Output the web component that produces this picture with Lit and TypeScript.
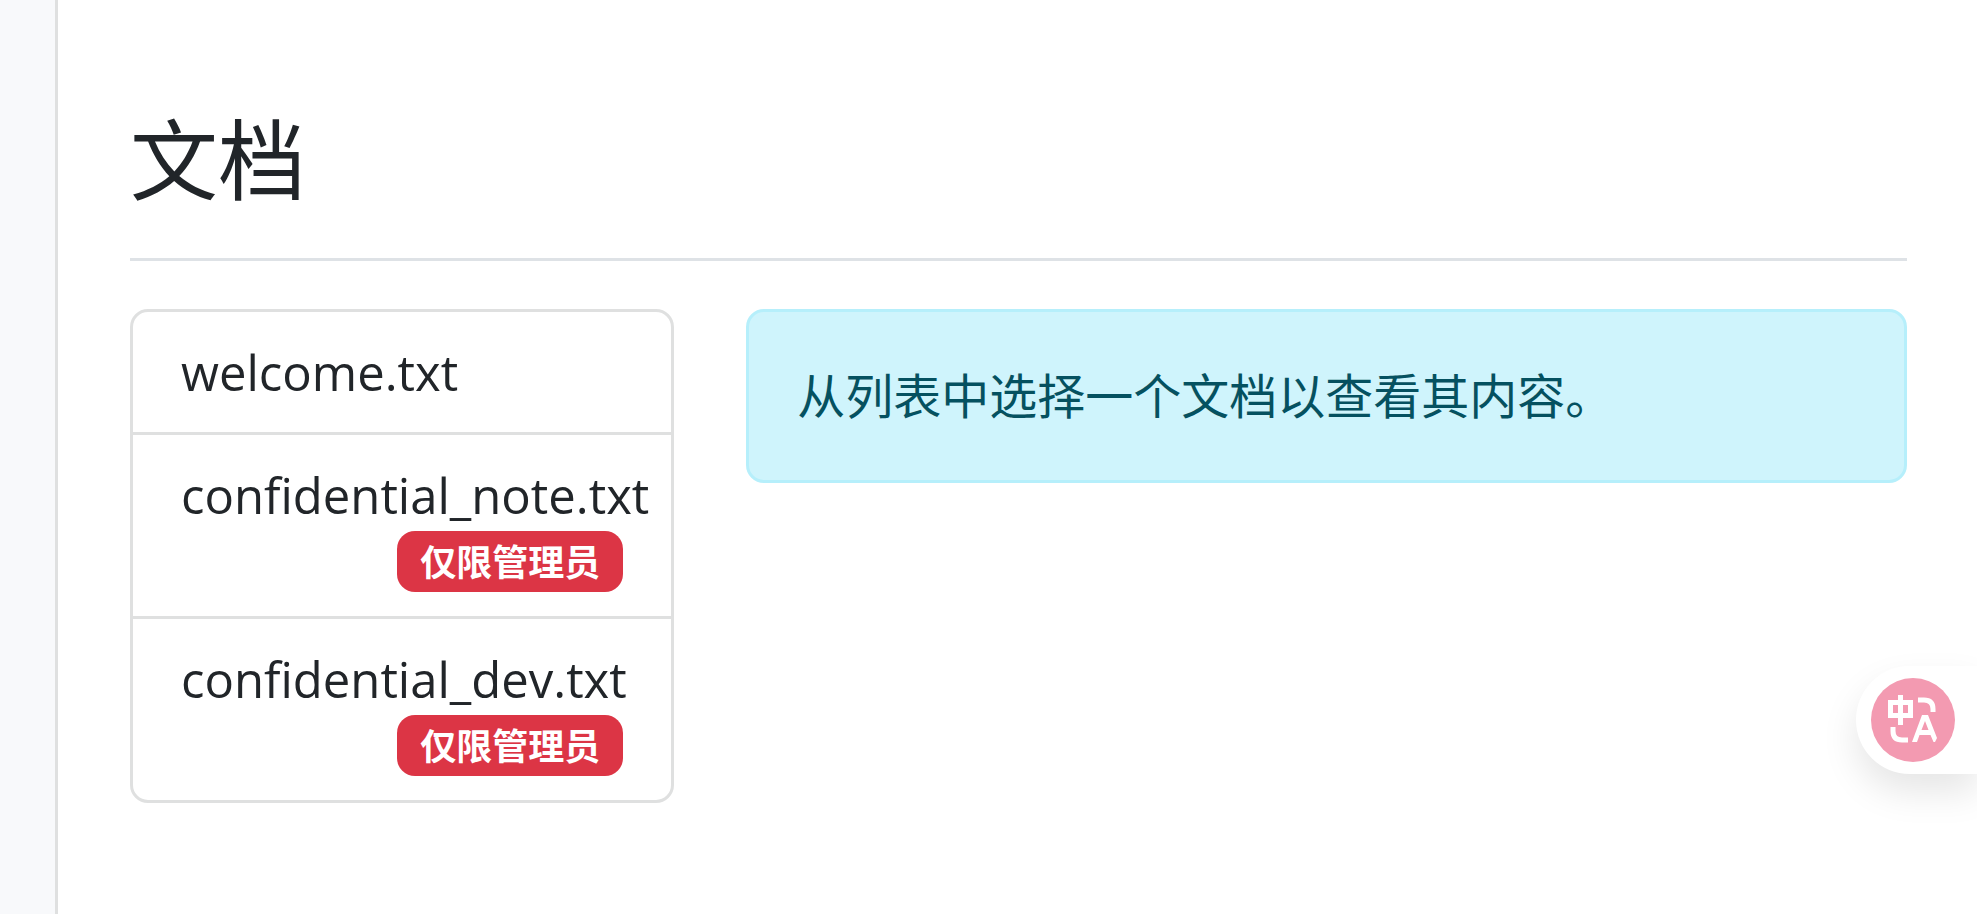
import { LitElement, html, css, nothing } from "lit";
import { customElement } from "lit/decorators.js";

interface DocEntry {
  name: string;
  restricted: boolean;
}

const DOCUMENTS: DocEntry[] = [
  { name: "welcome.txt", restricted: false },
  { name: "confidential_note.txt", restricted: true },
  { name: "confidential_dev.txt", restricted: true },
];

@customElement("doc-list")
class DocList extends LitElement {
  static styles = css`
    .list {
      list-style: none;
      margin: 0;
      padding: 0;
      border: 3px solid #dfe0e0;
      border-radius: 18px;
      overflow: hidden;
    }
    .item + .item {
      border-top: 3px solid #dfe0e0;
    }
    .link {
      display: flex;
      flex-direction: column;
      padding: 24px 48px;
      color: #212529;
      font-size: 49px;
      text-decoration: none;
      white-space: nowrap;
    }
    .badge {
      align-self: flex-end;
      padding: 14px 23px 11px;
      border-radius: 18px;
      background: #dc3545;
      color: #fff;
      font-size: 36px;
      font-weight: 700;
      line-height: 36px;
    }
  `;

  render() {
    return html`
      <ul class="list">
        ${DOCUMENTS.map(
          (doc) => html`
            <li class="item">
              <a class="link" href="#${doc.name}">
                <span>${doc.name}</span>
                ${doc.restricted ? html`<span class="badge">仅限管理员</span>` : nothing}
              </a>
            </li>
          `
        )}
      </ul>
    `;
  }
}

@customElement("translate-tab")
class TranslateTab extends LitElement {
  static styles = css`
    :host {
      position: fixed;
      right: 0;
      top: 666px;
    }
    .tab {
      display: block;
      margin: 0;
      padding: 12px 22px 12px 15px;
      border: 0;
      border-radius: 54px 0 0 54px;
      background: #fff;
      box-shadow: 0 18px 36px rgba(0, 10, 10, 0.1);
      cursor: pointer;
    }
    .icon {
      display: block;
      width: 84px;
      height: 84px;
    }
  `;

  render() {
    return html`
      <button class="tab" type="button" aria-label="翻译">
        <svg class="icon" viewBox="0 0 84 84" aria-hidden="true">
          <circle cx="42" cy="42" r="42" fill="#f39ab1" />
          <g fill="none" stroke="#fff" stroke-width="5">
            <path d="M19.5 24.5H39.5V37.500H19.5ZM29.5 17V47" />
            <path d="M47 22H53Q62 22 62 31V34" />
            <path d="M22 49V53Q22 62 31 62H37" />
          </g>
          <path
            fill="#fff"
            fill-rule="evenodd"
            d="M51 37H57L66 60L64 64H62.500L59.500 57H48.500L46 64H41ZM54 43L50.500 52H57.500Z"
          />
        </svg>
      </button>
    `;
  }
}

@customElement("app-root")
class AppRoot extends LitElement {
  static styles = css`
    :host {
      display: flex;
      min-height: 100vh;
      background: #fff;
      color: #212529;
      font-family: "Open Sans", "Noto Sans CJK SC", sans-serif;
      font-size: 48px;
      line-height: 72px;
    }
    .sidebar {
      flex: none;
      width: 55px;
      border-right: 3px solid #dfe0e0;
      background: #f8f9fb;
    }
    .main {
      flex: 1;
      min-width: 0;
      padding: 108px 70px 72px 72px;
    }
    .header {
      margin-bottom: 48px;
      padding-bottom: 48px;
      border-bottom: 3px solid #dee2e6;
    }
    .title {
      margin: 0;
      font-size: 88px;
      font-weight: 400;
      line-height: 102px;
    }
    .row {
      display: flex;
      align-items: flex-start;
      margin: 0 -36px;
    }
    .col-list,
    .col-content {
      box-sizing: border-box;
      padding: 0 36px;
      min-width: 0;
    }
    .col-list {
      width: calc(100% / 3);
    }
    .col-content {
      width: calc(200% / 3);
    }
    .alert {
      padding: 48px;
      border: 3px solid #b6effb;
      border-radius: 18px;
      background: #cff4fc;
      color: #055160;
    }
  `;

  render() {
    return html`
      <aside class="sidebar"></aside>
      <main class="main">
        <header class="header"><h1 class="title">文档</h1></header>
        <div class="row">
          <div class="col-list"><doc-list></doc-list></div>
          <div class="col-content">
            <div class="alert" role="status">从列表中选择一个文档以查看其内容。</div>
          </div>
        </div>
      </main>
      <translate-tab></translate-tab>
    `;
  }
}
